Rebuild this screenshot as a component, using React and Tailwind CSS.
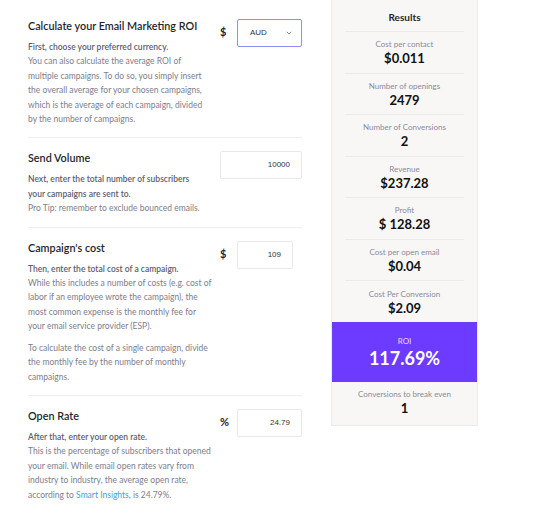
import React from 'react';

const Section = ({ title, first, children, unit, input, top }) => (
  <div className={`flex justify-between ${top ? 'pt-[17px]' : 'pt-[11px] border-t border-[#efeff3]'} pb-[11px]`}>
    <div className="w-[190px] whitespace-nowrap">
      <h2 className="text-[10.8px] leading-[18px] font-semibold text-[#1f1f2e]">{title}</h2>
      <div className="mt-[5px] text-[8.5px] leading-[14.4px] text-[#7d7d8e]">
        <div className="font-semibold text-[#5d5d70]">{first}</div>
        {children}
      </div>
    </div>
    <div className="w-[82px] flex items-start pt-[2px]">
      {unit && <span className="w-[17px] mt-[5px] text-[11px] font-bold text-[#1f1f2e]">{unit}</span>}
      {input}
    </div>
  </div>
);

const NumInput = ({ value, w }) => (
  <div
    className={`${w} h-[28px] flex items-center justify-end pr-[11px] bg-white border border-[#e7e7ec] rounded-[2px] text-[8px] text-[#333] font-['Liberation_Sans',Arial,sans-serif]`}
  >
    {value}
  </div>
);

const Stat = ({ label, value, last }) => (
  <div className={`mx-[13px] h-[41.5px] flex flex-col items-center justify-center ${last ? '' : 'border-b border-[#ebeae8]'}`}>
    <div className="text-[8px] leading-[12px] text-[#8a8a99]">{label}</div>
    <div className="text-[13px] leading-[16px] font-bold text-[#111]">{value}</div>
  </div>
);

export default function App() {
  return (
    <div className="w-[541px] h-[519px] bg-white flex pl-[28px] font-['Lato','Noto_Sans',sans-serif]">
      <div className="w-[274px]">
        <Section
          top
          title="Calculate your Email Marketing ROI"
          first="First, choose your preferred currency."
          unit="$"
          input={
            <div className="w-[65px] h-[28px] flex items-center justify-between pl-[12px] pr-[9px] bg-white border border-[#8e8ef4] rounded-[2px] text-[8px] text-[#333] font-['Liberation_Sans',Arial,sans-serif]">
              <span>AUD</span>
              <svg width="6" height="4" viewBox="0 0 6 4" fill="none" stroke="#777" strokeWidth="0.9">
                <path d="M0.8 0.8 L3 3 L5.2 0.8" />
              </svg>
            </div>
          }
        >
          You can also calculate the average ROI of<br />
          multiple campaigns. To do so, you simply insert<br />
          the overall average for your chosen campaigns,<br />
          which is the average of each campaign, divided<br />
          by the number of campaigns.
        </Section>

        <Section
          title="Send Volume"
          first="Next, enter the total number of subscribers"
          input={<NumInput value="10000" w="w-[82px]" />}
        >
          <div className="font-semibold text-[#5d5d70]">your campaigns are sent to.</div>
          Pro Tip: remember to exclude bounced emails.
        </Section>

        <Section
          title="Campaign's cost"
          first="Then, enter the total cost of a campaign."
          unit="$"
          input={<NumInput value="109" w="w-[56px]" />}
        >
          While this includes a number of costs (e.g. cost of<br />
          labor if an employee wrote the campaign), the<br />
          most common expense is the monthly fee for<br />
          your email service provider (ESP).
          <div className="mt-[7px]">
            To calculate the cost of a single campaign, divide<br />
            the monthly fee by the number of monthly<br />
            campaigns.
          </div>
        </Section>

        <Section
          title="Open Rate"
          first="After that, enter your open rate."
          unit="%"
          input={<NumInput value="24.79" w="w-[65px]" />}
        >
          This is the percentage of subscribers that opened<br />
          your email. While email open rates vary from<br />
          industry to industry, the average open rate,<br />
          according to <span className="text-[#3d9fe0]">Smart Insights</span>, is 24.79%.
        </Section>
      </div>

      <div className="ml-[29px] w-[147px] h-[426px] bg-[#f8f7f6] border-x border-b border-[#ecebea] flex flex-col">
        <div className="mx-[13px] h-[32px] pt-[10px] text-center text-[10px] font-bold text-[#1f1f2e] border-b border-[#ebeae8]">
          Results
        </div>
        <Stat label="Cost per contact" value="$0.011" />
        <Stat label="Number of openings" value="2479" />
        <Stat label="Number of Conversions" value="2" />
        <Stat label="Revenue" value="$237.28" />
        <Stat label="Profit" value="$ 128.28" />
        <Stat label="Cost per open email" value="$0.04" />
        <Stat label="Cost Per Conversion" value="$2.09" last />
        <div className="mt-[-1px] h-[60px] bg-[#6d3bff] flex flex-col items-center justify-center">
          <div className="text-[8px] leading-[12px] text-[#e6ddff]">ROI</div>
          <div className="text-[18px] leading-[22px] font-bold text-white">117.69%</div>
        </div>
        <Stat label="Conversions to break even" value="1" last />
      </div>
    </div>
  );
}
